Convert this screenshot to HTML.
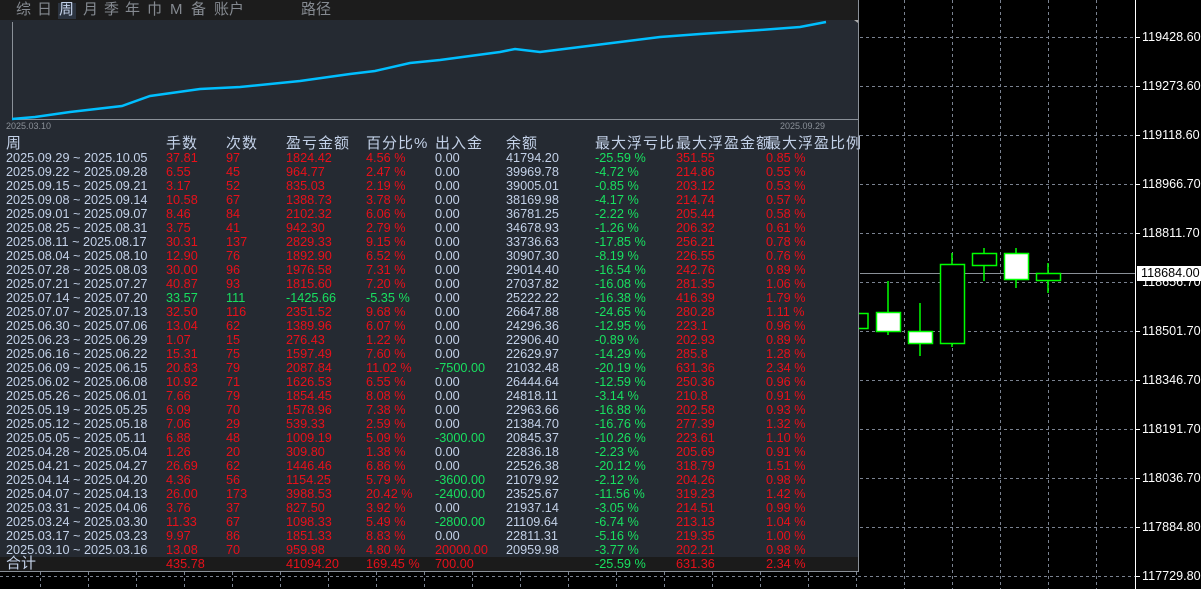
<!DOCTYPE html>
<html><head><meta charset="utf-8"><style>
*{margin:0;padding:0;box-sizing:border-box}
body{width:1201px;height:589px;background:#000;position:relative;overflow:hidden;font-family:"Liberation Sans","Noto Sans CJK SC",sans-serif}
.abs{position:absolute}
#panel{left:0;top:0;width:859px;height:572px;background:#252a32;border-right:1px solid #8a9098;border-bottom:1px solid #8a9098}
#tabs{left:0;top:0;width:858px;height:20px;background:#1c1c1c;color:#858a91;font-size:15px;line-height:20px}
#tabs span{position:absolute;top:0}
.r{position:absolute;left:0;width:858px;height:14px;line-height:14px;font-size:12.7px;color:#c3d1e8;white-space:nowrap}
.r span{position:absolute;top:0}
.c0{left:6px}.c1{left:166px}.c2{left:226px}.c3{left:286px}.c4{left:366px}.c5{left:435px}.c6{left:506px}.c7{left:595px}.c8{left:676px}.c9{left:766px}
.R{color:#e8101a}.G{color:#18e060}
.h{font-size:15px;height:16px;line-height:16px;letter-spacing:1px}
.ax{color:#fff;font-size:12.6px;position:absolute;left:1142px}
</style></head><body>
<svg class="abs" style="left:0;top:0" width="1201" height="589">
<g stroke="#7a8290" stroke-dasharray="3,3" stroke-width="1">
<line x1="860" y1="37.5" x2="1135" y2="37.5"/><line x1="860" y1="86.5" x2="1135" y2="86.5"/><line x1="860" y1="135.5" x2="1135" y2="135.5"/><line x1="860" y1="184.5" x2="1135" y2="184.5"/><line x1="860" y1="233.5" x2="1135" y2="233.5"/><line x1="860" y1="282.5" x2="1135" y2="282.5"/><line x1="860" y1="331.5" x2="1135" y2="331.5"/><line x1="860" y1="380.5" x2="1135" y2="380.5"/><line x1="860" y1="429.5" x2="1135" y2="429.5"/><line x1="860" y1="478.5" x2="1135" y2="478.5"/><line x1="860" y1="527.5" x2="1135" y2="527.5"/><line x1="0" y1="576.5" x2="1135" y2="576.5"/>
<line x1="904.5" y1="0" x2="904.5" y2="589"/><line x1="952.5" y1="0" x2="952.5" y2="589"/><line x1="1000.5" y1="0" x2="1000.5" y2="589"/><line x1="1048.5" y1="0" x2="1048.5" y2="589"/><line x1="1096.5" y1="0" x2="1096.5" y2="589"/>
<line x1="40.5" y1="572" x2="40.5" y2="589"/><line x1="88.5" y1="572" x2="88.5" y2="589"/><line x1="136.5" y1="572" x2="136.5" y2="589"/><line x1="184.5" y1="572" x2="184.5" y2="589"/><line x1="232.5" y1="572" x2="232.5" y2="589"/><line x1="280.5" y1="572" x2="280.5" y2="589"/><line x1="328.5" y1="572" x2="328.5" y2="589"/><line x1="376.5" y1="572" x2="376.5" y2="589"/><line x1="424.5" y1="572" x2="424.5" y2="589"/><line x1="472.5" y1="572" x2="472.5" y2="589"/><line x1="520.5" y1="572" x2="520.5" y2="589"/><line x1="568.5" y1="572" x2="568.5" y2="589"/><line x1="616.5" y1="572" x2="616.5" y2="589"/><line x1="664.5" y1="572" x2="664.5" y2="589"/><line x1="712.5" y1="572" x2="712.5" y2="589"/><line x1="760.5" y1="572" x2="760.5" y2="589"/><line x1="808.5" y1="572" x2="808.5" y2="589"/><line x1="856.5" y1="572" x2="856.5" y2="589"/>
</g>
<line x1="860" y1="273.5" x2="1135" y2="273.5" stroke="#8a9098"/>
<line x1="1135.5" y1="0" x2="1135.5" y2="589" stroke="#fff"/>
<g stroke="#fff"><line x1="1136" y1="37.5" x2="1140" y2="37.5"/><line x1="1136" y1="86.5" x2="1140" y2="86.5"/><line x1="1136" y1="135.5" x2="1140" y2="135.5"/><line x1="1136" y1="184.5" x2="1140" y2="184.5"/><line x1="1136" y1="233.5" x2="1140" y2="233.5"/><line x1="1136" y1="331.5" x2="1140" y2="331.5"/><line x1="1136" y1="380.5" x2="1140" y2="380.5"/><line x1="1136" y1="429.5" x2="1140" y2="429.5"/><line x1="1136" y1="478.5" x2="1140" y2="478.5"/><line x1="1136" y1="527.5" x2="1140" y2="527.5"/><line x1="1136" y1="576.5" x2="1140" y2="576.5"/></g>
<g stroke="#00ff00" stroke-width="1.5">
<line x1="888" y1="281" x2="888" y2="335"/><rect x="876.5" y="312.5" width="24" height="19" fill="#fff"/>
<line x1="920" y1="303" x2="920" y2="356"/><rect x="908.5" y="331.5" width="24" height="12" fill="#fff"/>
<line x1="952" y1="253" x2="952" y2="347"/><rect x="940.5" y="264.5" width="24" height="79" fill="#000"/>
<line x1="984" y1="248" x2="984" y2="281"/><rect x="972.5" y="253.5" width="24" height="12" fill="#000"/>
<line x1="1016" y1="248" x2="1016" y2="288"/><rect x="1004.5" y="253.5" width="24" height="26" fill="#fff"/>
<line x1="1048" y1="263" x2="1048" y2="293"/><rect x="1036.5" y="273.5" width="24" height="7" fill="#000"/>
<rect x="855" y="313.5" width="13" height="15" fill="#000"/>
</g>
</svg>
<div class="ax" style="top:30px">119428.60</div>
<div class="ax" style="top:79px">119273.60</div>
<div class="ax" style="top:128px">119118.60</div>
<div class="ax" style="top:177px">118966.70</div>
<div class="ax" style="top:226px">118811.70</div>
<div class="ax" style="top:275px">118656.70</div>
<div class="abs" style="left:1137px;top:266px;width:64px;height:15px;background:#fff;color:#000;font-size:12.6px;line-height:15px;padding-left:4px">118684.00</div>
<div class="ax" style="top:324px">118501.70</div>
<div class="ax" style="top:373px">118346.70</div>
<div class="ax" style="top:422px">118191.70</div>
<div class="ax" style="top:471px">118036.70</div>
<div class="ax" style="top:520px">117884.80</div>
<div class="ax" style="top:569px">117729.80</div>

<div id="panel" class="abs">
<div id="tabs" class="abs">
<div class="abs" style="left:58px;top:3px;width:18px;height:16px;background:#2c3440"></div>
<span style="left:16px">综</span><span style="left:37px">日</span><span style="left:59px;color:#c3d1e8">周</span><span style="left:83px">月</span><span style="left:104px">季</span><span style="left:125px">年</span><span style="left:147px">巾</span><span style="left:170px">M</span><span style="left:191px">备</span><span style="left:214px">账户</span><span style="left:301px">路径</span>
</div>
<svg class="abs" style="left:0;top:20px" width="858" height="112">
<line x1="12.5" y1="2" x2="12.5" y2="99" stroke="#8a9098"/>
<line x1="12" y1="99.5" x2="858" y2="99.5" stroke="#8a9098"/>
<polyline fill="none" stroke="#00bfff" stroke-width="2.5" points="12,99 35,97 70,92 122,86 150,76 200,69 240,67 300,61 350,54 375,51 410,43 440,40 500,32 515,29 540,32 580,27 620,22 660,17 700,14 760,10 800,7 826,2"/>
<polygon points="858,-3 854,0 858,3" fill="#aaa"/>
</svg>
<div class="abs" style="left:6px;top:121px;font-size:9px;color:#8a9098">2025.03.10</div>
<div class="abs" style="left:780px;top:121px;font-size:9px;color:#8a9098">2025.09.29</div>

<div class="r h" style="top:136px"><span class="c0">周</span><span class="c1">手数</span><span class="c2">次数</span><span class="c3">盈亏金额</span><span class="c4">百分比%</span><span class="c5">出入金</span><span class="c6">余额</span><span class="c7">最大浮亏比</span><span class="c8">最大浮盈金额</span><span class="c9">最大浮盈比例</span></div>

<div class="r" style="top:151px"><span class="c0">2025.09.29 ~ 2025.10.05</span><span class="c1 R">37.81</span><span class="c2 R">97</span><span class="c3 R">1824.42</span><span class="c4 R">4.56 %</span><span class="c5">0.00</span><span class="c6">41794.20</span><span class="c7 G">-25.59 %</span><span class="c8 R">351.55</span><span class="c9 R">0.85 %</span></div>
<div class="r" style="top:165px"><span class="c0">2025.09.22 ~ 2025.09.28</span><span class="c1 R">6.55</span><span class="c2 R">45</span><span class="c3 R">964.77</span><span class="c4 R">2.47 %</span><span class="c5">0.00</span><span class="c6">39969.78</span><span class="c7 G">-4.72 %</span><span class="c8 R">214.86</span><span class="c9 R">0.55 %</span></div>
<div class="r" style="top:179px"><span class="c0">2025.09.15 ~ 2025.09.21</span><span class="c1 R">3.17</span><span class="c2 R">52</span><span class="c3 R">835.03</span><span class="c4 R">2.19 %</span><span class="c5">0.00</span><span class="c6">39005.01</span><span class="c7 G">-0.85 %</span><span class="c8 R">203.12</span><span class="c9 R">0.53 %</span></div>
<div class="r" style="top:193px"><span class="c0">2025.09.08 ~ 2025.09.14</span><span class="c1 R">10.58</span><span class="c2 R">67</span><span class="c3 R">1388.73</span><span class="c4 R">3.78 %</span><span class="c5">0.00</span><span class="c6">38169.98</span><span class="c7 G">-4.17 %</span><span class="c8 R">214.74</span><span class="c9 R">0.57 %</span></div>
<div class="r" style="top:207px"><span class="c0">2025.09.01 ~ 2025.09.07</span><span class="c1 R">8.46</span><span class="c2 R">84</span><span class="c3 R">2102.32</span><span class="c4 R">6.06 %</span><span class="c5">0.00</span><span class="c6">36781.25</span><span class="c7 G">-2.22 %</span><span class="c8 R">205.44</span><span class="c9 R">0.58 %</span></div>
<div class="r" style="top:221px"><span class="c0">2025.08.25 ~ 2025.08.31</span><span class="c1 R">3.75</span><span class="c2 R">41</span><span class="c3 R">942.30</span><span class="c4 R">2.79 %</span><span class="c5">0.00</span><span class="c6">34678.93</span><span class="c7 G">-1.26 %</span><span class="c8 R">206.32</span><span class="c9 R">0.61 %</span></div>
<div class="r" style="top:235px"><span class="c0">2025.08.11 ~ 2025.08.17</span><span class="c1 R">30.31</span><span class="c2 R">137</span><span class="c3 R">2829.33</span><span class="c4 R">9.15 %</span><span class="c5">0.00</span><span class="c6">33736.63</span><span class="c7 G">-17.85 %</span><span class="c8 R">256.21</span><span class="c9 R">0.78 %</span></div>
<div class="r" style="top:249px"><span class="c0">2025.08.04 ~ 2025.08.10</span><span class="c1 R">12.90</span><span class="c2 R">76</span><span class="c3 R">1892.90</span><span class="c4 R">6.52 %</span><span class="c5">0.00</span><span class="c6">30907.30</span><span class="c7 G">-8.19 %</span><span class="c8 R">226.55</span><span class="c9 R">0.76 %</span></div>
<div class="r" style="top:263px"><span class="c0">2025.07.28 ~ 2025.08.03</span><span class="c1 R">30.00</span><span class="c2 R">96</span><span class="c3 R">1976.58</span><span class="c4 R">7.31 %</span><span class="c5">0.00</span><span class="c6">29014.40</span><span class="c7 G">-16.54 %</span><span class="c8 R">242.76</span><span class="c9 R">0.89 %</span></div>
<div class="r" style="top:277px"><span class="c0">2025.07.21 ~ 2025.07.27</span><span class="c1 R">40.87</span><span class="c2 R">93</span><span class="c3 R">1815.60</span><span class="c4 R">7.20 %</span><span class="c5">0.00</span><span class="c6">27037.82</span><span class="c7 G">-16.08 %</span><span class="c8 R">281.35</span><span class="c9 R">1.06 %</span></div>
<div class="r" style="top:291px"><span class="c0">2025.07.14 ~ 2025.07.20</span><span class="c1 G">33.57</span><span class="c2 G">111</span><span class="c3 G">-1425.66</span><span class="c4 G">-5.35 %</span><span class="c5">0.00</span><span class="c6">25222.22</span><span class="c7 G">-16.38 %</span><span class="c8 R">416.39</span><span class="c9 R">1.79 %</span></div>
<div class="r" style="top:305px"><span class="c0">2025.07.07 ~ 2025.07.13</span><span class="c1 R">32.50</span><span class="c2 R">116</span><span class="c3 R">2351.52</span><span class="c4 R">9.68 %</span><span class="c5">0.00</span><span class="c6">26647.88</span><span class="c7 G">-24.65 %</span><span class="c8 R">280.28</span><span class="c9 R">1.11 %</span></div>
<div class="r" style="top:319px"><span class="c0">2025.06.30 ~ 2025.07.06</span><span class="c1 R">13.04</span><span class="c2 R">62</span><span class="c3 R">1389.96</span><span class="c4 R">6.07 %</span><span class="c5">0.00</span><span class="c6">24296.36</span><span class="c7 G">-12.95 %</span><span class="c8 R">223.1</span><span class="c9 R">0.96 %</span></div>
<div class="r" style="top:333px"><span class="c0">2025.06.23 ~ 2025.06.29</span><span class="c1 R">1.07</span><span class="c2 R">15</span><span class="c3 R">276.43</span><span class="c4 R">1.22 %</span><span class="c5">0.00</span><span class="c6">22906.40</span><span class="c7 G">-0.89 %</span><span class="c8 R">202.93</span><span class="c9 R">0.89 %</span></div>
<div class="r" style="top:347px"><span class="c0">2025.06.16 ~ 2025.06.22</span><span class="c1 R">15.31</span><span class="c2 R">75</span><span class="c3 R">1597.49</span><span class="c4 R">7.60 %</span><span class="c5">0.00</span><span class="c6">22629.97</span><span class="c7 G">-14.29 %</span><span class="c8 R">285.8</span><span class="c9 R">1.28 %</span></div>
<div class="r" style="top:361px"><span class="c0">2025.06.09 ~ 2025.06.15</span><span class="c1 R">20.83</span><span class="c2 R">79</span><span class="c3 R">2087.84</span><span class="c4 R">11.02 %</span><span class="c5 G">-7500.00</span><span class="c6">21032.48</span><span class="c7 G">-20.19 %</span><span class="c8 R">631.36</span><span class="c9 R">2.34 %</span></div>
<div class="r" style="top:375px"><span class="c0">2025.06.02 ~ 2025.06.08</span><span class="c1 R">10.92</span><span class="c2 R">71</span><span class="c3 R">1626.53</span><span class="c4 R">6.55 %</span><span class="c5">0.00</span><span class="c6">26444.64</span><span class="c7 G">-12.59 %</span><span class="c8 R">250.36</span><span class="c9 R">0.96 %</span></div>
<div class="r" style="top:389px"><span class="c0">2025.05.26 ~ 2025.06.01</span><span class="c1 R">7.66</span><span class="c2 R">79</span><span class="c3 R">1854.45</span><span class="c4 R">8.08 %</span><span class="c5">0.00</span><span class="c6">24818.11</span><span class="c7 G">-3.14 %</span><span class="c8 R">210.8</span><span class="c9 R">0.91 %</span></div>
<div class="r" style="top:403px"><span class="c0">2025.05.19 ~ 2025.05.25</span><span class="c1 R">6.09</span><span class="c2 R">70</span><span class="c3 R">1578.96</span><span class="c4 R">7.38 %</span><span class="c5">0.00</span><span class="c6">22963.66</span><span class="c7 G">-16.88 %</span><span class="c8 R">202.58</span><span class="c9 R">0.93 %</span></div>
<div class="r" style="top:417px"><span class="c0">2025.05.12 ~ 2025.05.18</span><span class="c1 R">7.06</span><span class="c2 R">29</span><span class="c3 R">539.33</span><span class="c4 R">2.59 %</span><span class="c5">0.00</span><span class="c6">21384.70</span><span class="c7 G">-16.76 %</span><span class="c8 R">277.39</span><span class="c9 R">1.32 %</span></div>
<div class="r" style="top:431px"><span class="c0">2025.05.05 ~ 2025.05.11</span><span class="c1 R">6.88</span><span class="c2 R">48</span><span class="c3 R">1009.19</span><span class="c4 R">5.09 %</span><span class="c5 G">-3000.00</span><span class="c6">20845.37</span><span class="c7 G">-10.26 %</span><span class="c8 R">223.61</span><span class="c9 R">1.10 %</span></div>
<div class="r" style="top:445px"><span class="c0">2025.04.28 ~ 2025.05.04</span><span class="c1 R">1.26</span><span class="c2 R">20</span><span class="c3 R">309.80</span><span class="c4 R">1.38 %</span><span class="c5">0.00</span><span class="c6">22836.18</span><span class="c7 G">-2.23 %</span><span class="c8 R">205.69</span><span class="c9 R">0.91 %</span></div>
<div class="r" style="top:459px"><span class="c0">2025.04.21 ~ 2025.04.27</span><span class="c1 R">26.69</span><span class="c2 R">62</span><span class="c3 R">1446.46</span><span class="c4 R">6.86 %</span><span class="c5">0.00</span><span class="c6">22526.38</span><span class="c7 G">-20.12 %</span><span class="c8 R">318.79</span><span class="c9 R">1.51 %</span></div>
<div class="r" style="top:473px"><span class="c0">2025.04.14 ~ 2025.04.20</span><span class="c1 R">4.36</span><span class="c2 R">56</span><span class="c3 R">1154.25</span><span class="c4 R">5.79 %</span><span class="c5 G">-3600.00</span><span class="c6">21079.92</span><span class="c7 G">-2.12 %</span><span class="c8 R">204.26</span><span class="c9 R">0.98 %</span></div>
<div class="r" style="top:487px"><span class="c0">2025.04.07 ~ 2025.04.13</span><span class="c1 R">26.00</span><span class="c2 R">173</span><span class="c3 R">3988.53</span><span class="c4 R">20.42 %</span><span class="c5 G">-2400.00</span><span class="c6">23525.67</span><span class="c7 G">-11.56 %</span><span class="c8 R">319.23</span><span class="c9 R">1.42 %</span></div>
<div class="r" style="top:501px"><span class="c0">2025.03.31 ~ 2025.04.06</span><span class="c1 R">3.76</span><span class="c2 R">37</span><span class="c3 R">827.50</span><span class="c4 R">3.92 %</span><span class="c5">0.00</span><span class="c6">21937.14</span><span class="c7 G">-3.05 %</span><span class="c8 R">214.51</span><span class="c9 R">0.99 %</span></div>
<div class="r" style="top:515px"><span class="c0">2025.03.24 ~ 2025.03.30</span><span class="c1 R">11.33</span><span class="c2 R">67</span><span class="c3 R">1098.33</span><span class="c4 R">5.49 %</span><span class="c5 G">-2800.00</span><span class="c6">21109.64</span><span class="c7 G">-6.74 %</span><span class="c8 R">213.13</span><span class="c9 R">1.04 %</span></div>
<div class="r" style="top:529px"><span class="c0">2025.03.17 ~ 2025.03.23</span><span class="c1 R">9.97</span><span class="c2 R">86</span><span class="c3 R">1851.33</span><span class="c4 R">8.83 %</span><span class="c5">0.00</span><span class="c6">22811.31</span><span class="c7 G">-5.16 %</span><span class="c8 R">219.35</span><span class="c9 R">1.00 %</span></div>
<div class="r" style="top:543px"><span class="c0">2025.03.10 ~ 2025.03.16</span><span class="c1 R">13.08</span><span class="c2 R">70</span><span class="c3 R">959.98</span><span class="c4 R">4.80 %</span><span class="c5 R">20000.00</span><span class="c6">20959.98</span><span class="c7 G">-3.77 %</span><span class="c8 R">202.21</span><span class="c9 R">0.98 %</span></div>
<div class="r" style="top:557px;background:#1b1b1b"><span class="c0" style="font-size:15px">合计</span><span class="c1 R">435.78</span><span class="c3 R">41094.20</span><span class="c4 R">169.45 %</span><span class="c5 R">700.00</span><span class="c7 G">-25.59 %</span><span class="c8 R">631.36</span><span class="c9 R">2.34 %</span></div>
</div>
</body></html>
